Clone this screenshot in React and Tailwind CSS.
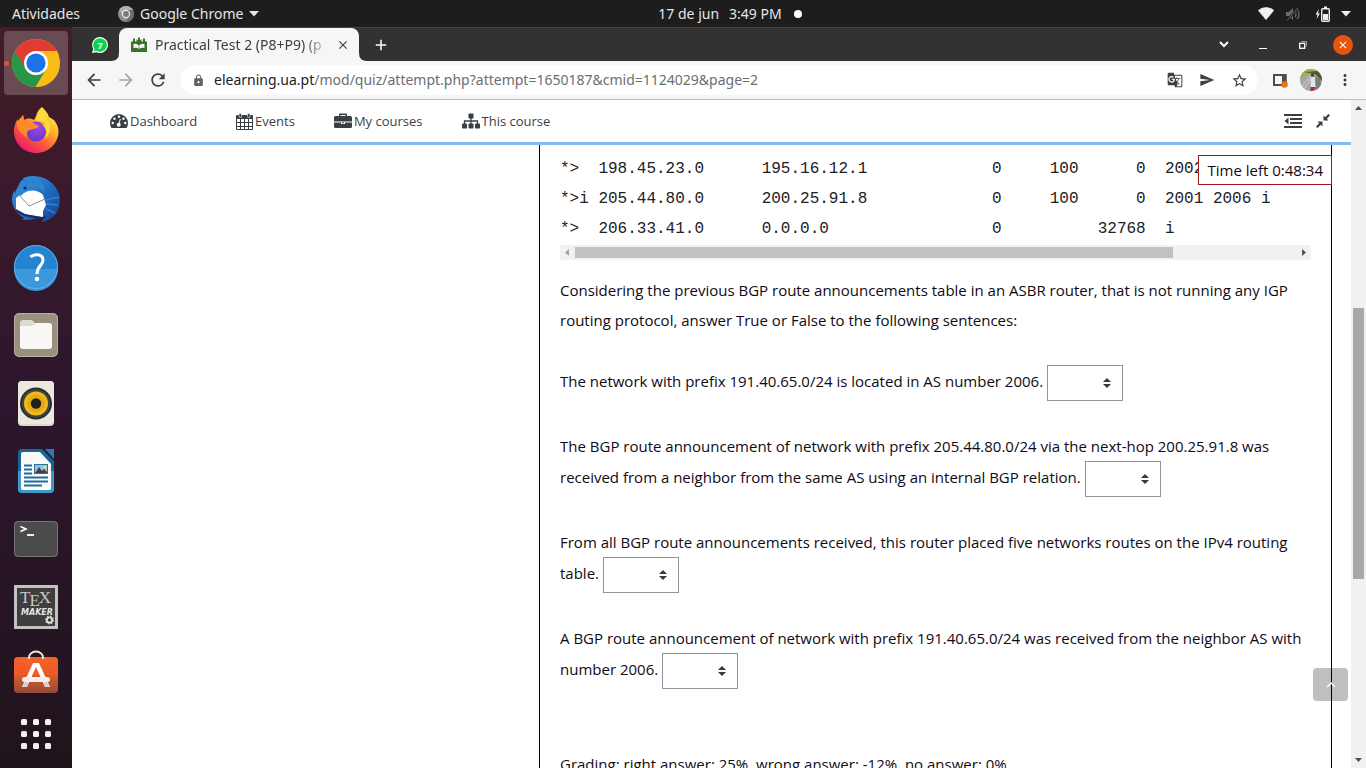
import React from "react";
import {
  MdArrowBack,
  MdArrowForward,
  MdRefresh,
  MdLock,
  MdGTranslate,
  MdSend,
  MdStarBorder,
  MdMoreVert,
  MdClose,
  MdAdd,
} from "react-icons/md";

/* ---------- Dock icons ---------- */

function ChromeLogo() {
  return (
    <svg viewBox="0 0 48 48" className="size-12">
      <defs>
        <clipPath id="chromeDisc">
          <circle cx="24" cy="24" r="24" />
        </clipPath>
      </defs>
      <g clipPath="url(#chromeDisc)">
        <rect width="48" height="48" fill="#fbbc15" />
        <path d="M24 12H48V0H0V8L13.6 30Z" fill="#e03c31" />
        <path d="M3.2 12L13.6 30Q17 36 24 36L34.4 30L23.5 48H0V12Z" fill="#27964a" />
        <path d="M24 12H47L48 48H24L34.4 30Z" fill="#fbbc15" />
      </g>
      <circle cx="24" cy="24" r="12" fill="#fff" />
      <circle cx="24" cy="24" r="9.6" fill="#1a73e8" />
    </svg>
  );
}

function FirefoxLogo() {
  return (
    <svg viewBox="0 0 48 48" className="size-12">
      <defs>
        <linearGradient id="fxBody" x1="0.85" y1="0.05" x2="0.2" y2="0.95">
          <stop offset="0" stopColor="#fff04a" />
          <stop offset="0.35" stopColor="#ffb02e" />
          <stop offset="0.65" stopColor="#ff5a36" />
          <stop offset="1" stopColor="#e8186f" />
        </linearGradient>
        <radialGradient id="fxGlobe" cx="0.6" cy="0.3" r="0.8">
          <stop offset="0" stopColor="#a344e8" />
          <stop offset="1" stopColor="#5a37c8" />
        </radialGradient>
      </defs>
      <path
        d="M30 0C33 3 36 6 37 10L42 13C45 17 47 21 46.500 26C45.500 37 36 46 24.500 46C12 46 2 37 2 24C2 19 4 14 6 12L6 16L11 8L12 13C15 11 19 11 22 13L24 9C25 5 27 2 30 0Z"
        fill="url(#fxBody)"
      />
      <circle cx="24" cy="24.500" r="10" fill="url(#fxGlobe)" />
      <path d="M5 15L11 8L12.500 14C16 12 20 15 23 17L27 19C25 22 20 22 17 23C14 25 15 28 16 31C9 27 4 22 5 15Z" fill="#ff8b28" />
      <path d="M24 14C29 13 33 15 34 18L30 17C34 21 36 26 33 32C37 29 39 23 37 16L34 11L30 1C27 5 24 10 24 14Z" fill="#ffd83a" />
    </svg>
  );
}

function ThunderbirdLogo() {
  return (
    <svg viewBox="0 0 48 48" className="size-12">
      <defs>
        <linearGradient id="tbBody" x1="0" y1="0" x2="1" y2="1">
          <stop offset="0" stopColor="#3d9be6" />
          <stop offset="0.6" stopColor="#1d66b8" />
          <stop offset="1" stopColor="#1c3b8c" />
        </linearGradient>
      </defs>
      <path
        d="M10 4C16 0 26 0 34 4C43 9 48 17 48 26C48 37 40 46 29 47L34 41L18 45L10 45L12 43C5 39 0 32 0 24C0 21 1 18 3 15L3 19C5 12 8 7 14 4Z"
        fill="url(#tbBody)"
      />
      <path d="M4 23L8 20L12 18C18 14 27 15 31 20L34 30L31 36L31 42L10 39L4 34Z" fill="#fff" />
      <path d="M7 20L17 31L33 24" fill="none" stroke="#8d8d8d" strokeWidth="1" />
      <path d="M4 34L13 39L29 42L27 44L12 41L5 37Z" fill="#1a2b68" />
      <path d="M9 6C5 11 5 17 9 21C12 18 13 15 16 13C22 11 27 12 32 16C34 11 29 5 21 4C16 3 12 3 9 6Z" fill="#2e83d3" />
      <path d="M33 25L47 22M34 29L46 30M34 34L43 38" stroke="#2e83d3" strokeWidth="1.500" />
      <circle cx="13" cy="13" r="1.600" fill="#0f2a55" />
    </svg>
  );
}

function HelpLogo() {
  return (
    <svg viewBox="0 0 48 48" className="size-12">
      <circle cx="24" cy="24" r="22" fill="#2484cf" />
      <path d="M2 26H46A22 22 0 0 1 2 26Z" fill="#3c97dc" />
      <circle cx="24" cy="24" r="21.500" fill="none" stroke="#62b0e8" />
      <path d="M18.500 14C22 10.500 31 10.500 31 17C31 23 25 22.500 25 31" fill="none" stroke="#fff" strokeWidth="3" />
      <circle cx="25" cy="36" r="2.300" fill="#fff" />
    </svg>
  );
}

function FilesLogo() {
  return (
    <svg viewBox="0 0 48 48" className="size-12">
      <rect x="2" y="2" width="44" height="44" rx="5" fill="#99907e" />
      <rect x="2.500" y="2.500" width="43" height="43" rx="5" fill="none" stroke="#b8b1a2" />
      <path d="M8 12Q8 9 11 9H20L24 13H36V20H8Z" fill="#e0dbd1" />
      <path d="M8 15H20L24 12H37Q40 12 40 15V35Q40 38 37 38H11Q8 38 8 35Z" fill="#f9f8f6" />
    </svg>
  );
}

function RhythmboxLogo() {
  return (
    <svg viewBox="0 0 48 48" className="size-12">
      <rect x="6" y="2" width="36" height="45" rx="4" fill="#dedacf" />
      <rect x="6" y="2" width="36" height="43" rx="4" fill="#ebe8df" />
      <circle cx="24" cy="24.500" r="16" fill="#2f2f2f" />
      <circle cx="24" cy="24.500" r="14" fill="#444" />
      <circle cx="24" cy="24.500" r="12" fill="#f2b91c" />
      <circle cx="24" cy="24.500" r="9" fill="#e3aa12" />
      <circle cx="24" cy="24.500" r="5.200" fill="#202020" />
    </svg>
  );
}

function WriterLogo() {
  return (
    <svg viewBox="0 0 48 48" className="size-12">
      <path d="M10 2H30L42 14V42Q42 46 38 46H10Q6 46 6 42V6Q6 2 10 2Z" fill="#1b6595" />
      <path d="M6 24H42V42Q42 46 38 46H10Q6 46 6 42Z" fill="#3f9aca" />
      <path d="M33 2H42V12Z" fill="#2b7dac" />
      <path d="M11 5H28L39 17V41Q39 43 37 43H11Q9 43 9 41V7Q9 5 11 5Z" fill="#fafafa" />
      <path d="M12 18.500H20M12 22.500H20M12 26.500H20M12 30.500H36M12 34.500H36M12 38.500H30" stroke="#1f6d9e" strokeWidth="2" />
      <rect x="22" y="17" width="14" height="10" fill="#2a719e" />
      <rect x="23" y="18" width="12" height="8" fill="#8fc5e4" />
      <path d="M23 26L27 20L30 24L32 22L35 25V26Z" fill="#44413c" />
      <circle cx="33" cy="20" r="1.500" fill="#f5df57" />
    </svg>
  );
}

function TerminalLogo() {
  return (
    <svg viewBox="0 0 48 48" className="size-12">
      <rect x="2" y="6" width="44" height="36" rx="4" fill="#4b4b4b" />
      <rect x="2.500" y="6.500" width="43" height="35" rx="4" fill="none" stroke="#757575" />
      <path d="M8.500 11.500L14 14L8.500 16.500" fill="none" stroke="#fff" strokeWidth="1.600" />
      <path d="M15 20H22" stroke="#fff" strokeWidth="1.800" />
    </svg>
  );
}

function TexmakerLogo() {
  return (
    <svg viewBox="0 0 48 48" className="size-12">
      <rect x="2" y="2" width="44" height="44" fill="#c2c2c2" />
      <rect x="5" y="5" width="38" height="38" fill="#3e3e3e" />
      <text x="8" y="20" fill="#c9c9c9" fontFamily="Liberation Serif, serif" fontSize="17">
        T<tspan dx="-1" dy="3">E</tspan><tspan dx="-1" dy="-3">X</tspan>
      </text>
      <text x="9" y="32" fill="#e4e4e4" fontFamily="DejaVu Sans, sans-serif" fontWeight="700" fontStyle="italic" fontSize="8">
        MAKER
      </text>
      <circle cx="37.500" cy="37" r="2.600" fill="none" stroke="#ddd" strokeWidth="1.800" />
      <circle cx="37.500" cy="37" r="3.900" fill="none" stroke="#ddd" strokeWidth="1.200" strokeDasharray="1.600 1.460" />
    </svg>
  );
}

function SoftwareLogo() {
  return (
    <svg viewBox="0 0 48 54" className="h-[54px] w-12">
      <defs>
        <linearGradient id="bag" x1="0" y1="0" x2="0" y2="1">
          <stop offset="0" stopColor="#f5622a" />
          <stop offset="0.5" stopColor="#ee5a26" />
          <stop offset="0.51" stopColor="#dc5a2c" />
          <stop offset="1" stopColor="#934a38" />
        </linearGradient>
      </defs>
      <rect x="2" y="9" width="44" height="36" rx="4" fill="url(#bag)" />
      <path d="M17 11C16 1 32 1 31 11" fill="none" stroke="#f4e3cf" strokeWidth="2" />
      <path d="M21 15H27L38 39H33L24 19L15 39H10Z" fill="#fff" />
      <path d="M10 39L13 33H17L15 39ZM38 39L35 33H31L33 39Z" fill="#d9cfca" />
      <rect x="10" y="29" width="28" height="5" rx="2.500" fill="#f6eeea" />
    </svg>
  );
}

function AppsGrid() {
  const steps = [0, 12, 24];
  return (
    <svg viewBox="0 0 30 30" className="size-[30px]" fill="#f2f0f1">
      {steps.map((y) => steps.map((x) => <rect key={x + "-" + y} x={x} y={y} width="6" height="6" rx="1.500" />))}
    </svg>
  );
}

const dockApps = [
  ["Firefox", FirefoxLogo],
  ["Thunderbird", ThunderbirdLogo],
  ["Ajuda", HelpLogo],
  ["Ficheiros", FilesLogo],
  ["Rhythmbox", RhythmboxLogo],
  ["LibreOffice Writer", WriterLogo],
  ["Terminal", TerminalLogo],
  ["Texmaker", TexmakerLogo],
  ["Ubuntu Software", SoftwareLogo],
];

function Dock() {
  return (
    <aside className="flex w-[72px] shrink-0 flex-col items-center gap-1 bg-linear-to-b from-[#431c28] via-[#2e162e] to-[#20141c] pt-1">
      <button aria-label="Google Chrome" className="relative flex size-16 shrink-0 items-center justify-center rounded-[4px] bg-[#6a4b53]">
        <ChromeLogo />
        <span className="absolute top-[30px] left-0 size-[5px] rounded-full bg-[#e95420]" />
      </button>
      {dockApps.map(([name, Logo]) => (
        <button key={name} aria-label={name} className="flex size-16 shrink-0 items-center justify-center">
          <Logo />
        </button>
      ))}
      <button aria-label="Mostrar aplicações" className="flex h-[46px] w-16 shrink-0 items-center justify-center">
        <AppsGrid />
      </button>
    </aside>
  );
}

/* ---------- Desktop top bar ---------- */

function TopBar() {
  return (
    <header className="grid h-[27px] shrink-0 grid-cols-[1fr_auto_1fr] items-center bg-[#1d1d1d] text-[14px] leading-5 text-[#e6e6e6]">
      <div className="flex items-center pl-3">
        <button>Atividades</button>
        <button className="ml-[38px] flex items-center gap-1.5">
          <svg viewBox="0 0 16 16" className="size-4">
            <circle cx="8" cy="8" r="8" fill="#8e8e8e" />
            <path d="M8 4H15A8 8 0 0 0 1.500 3.500L4.500 10Z" fill="#b0b0b0" />
            <path d="M8 16A8 8 0 0 0 15 4H8L11.500 10Z" fill="#6c6c6c" />
            <circle cx="8" cy="8" r="4.200" fill="#e8e8e8" />
            <circle cx="8" cy="8" r="2.900" fill="#777" />
          </svg>
          <span>Google Chrome</span>
          <svg viewBox="0 0 10 6" className="h-[6px] w-[10px]" fill="#e6e6e6">
            <path d="M0 0H10L5 5.500Z" />
          </svg>
        </button>
      </div>
      <button className="flex items-center">
        <span className="ml-[94px]">17 de jun</span>
        <span className="ml-2.5">3:49 PM</span>
        <span className="ml-3 size-2 rounded-full bg-white" />
      </button>
      <button aria-label="Menu do sistema" className="flex items-center justify-end pr-[15px]">
        <svg viewBox="0 0 16 13" className="h-[13px] w-4" fill="#f0f0f0">
          <path d="M8 13L0 3.500C4 -1 12 -1 16 3.500Z" />
        </svg>
        <svg viewBox="0 0 15 14" className="ml-3 h-[14px] w-[15px]">
          <path d="M0 5H3L7 1V13L3 9H0Z" fill="#6b6b6b" />
          <path d="M9 4Q11 7 9 10M11 2Q15 7 11 12" fill="none" stroke="#6b6b6b" strokeWidth="1.200" />
          <path d="M1.500 13L12 1" stroke="#1d1d1d" strokeWidth="2.500" />
          <path d="M1 13.500L12 1" stroke="#6b6b6b" strokeWidth="1" />
        </svg>
        <svg viewBox="0 0 15 16" className="ml-3.5 h-4 w-[15px]">
          <path d="M4 3L0.500 8.500H2.500L1.500 13L5 7.500H3Z" fill="#f0f0f0" />
          <rect x="6.700" y="2.700" width="7.600" height="12.600" rx="1" fill="none" stroke="#f0f0f0" strokeWidth="1.400" />
          <rect x="9" y="0.500" width="3" height="2" fill="#f0f0f0" />
          <rect x="8" y="8" width="5" height="6" fill="#f0f0f0" />
        </svg>
        <svg viewBox="0 0 10 6" className="ml-[11px] h-[6px] w-[10px]" fill="#f0f0f0">
          <path d="M0 0H10L5 5.500Z" />
        </svg>
      </button>
    </header>
  );
}

/* ---------- Browser chrome ---------- */

function TabStrip() {
  return (
    <div className="flex h-[34px] shrink-0 items-center border-t border-[#454344] bg-[#333132]">
      <button aria-label="WhatsApp" className="ml-5 shrink-0">
        <svg viewBox="0 0 16 16" className="size-4">
          <path d="M8 0A8 8 0 1 1 4.500 15.200L0 16L1.200 12A8 8 0 0 1 8 0Z" fill="#fff" />
          <path d="M8 1.200A6.800 6.800 0 1 1 4.500 13.800L1.800 14.300L2.500 12A6.800 6.800 0 0 1 8 1.200Z" fill="#0bd34f" />
          <text x="5.400" y="11.500" fill="#fff" fontSize="9" fontWeight="700" fontFamily="Open Sans, sans-serif">7</text>
        </svg>
      </button>
      <div className="ml-[3px] flex h-full items-end">
        <svg viewBox="0 0 8 8" className="size-2" fill="#f6f6f7">
          <path d="M8 0V8H0Q8 8 8 0Z" />
        </svg>
        <div className="flex h-full w-60 items-center rounded-t-lg bg-[#f6f6f7] pr-[9px] pl-3">
          <svg viewBox="0 0 16 16" className="size-4 shrink-0" fill="#38702a">
            <path d="M0 4.500H2V1.500H4V4.500H5.500V2L7 3.500V0.500H9V3.500L10.500 2V4.500H12V1.500H14V4.500H16V15H0Z" />
            <path d="M2.500 7Q5.500 6 8 8.500Q10.500 6 13.500 7V11Q10.500 10 8 12Q5.500 10 2.500 11Z" fill="#f6f6f7" />
            <path d="M8 8.500V12" stroke="#38702a" strokeWidth="0.600" />
          </svg>
          <span className="ml-2 flex-1 text-[14px] leading-5 whitespace-nowrap text-[#3c4043] [mask-image:linear-gradient(to_right,black_85%,transparent)]">
            Practical Test 2 (P8+P9) (p
          </span>
          <button aria-label="Fechar separador" className="ml-1.5 shrink-0 text-[#3c4043]">
            <MdClose size={14} />
          </button>
        </div>
        <svg viewBox="0 0 8 8" className="size-2" fill="#f6f6f7">
          <path d="M0 0V8H8Q0 8 0 0Z" />
        </svg>
      </div>
      <button aria-label="Novo separador" className="ml-[5px] text-white">
        <MdAdd size={18} />
      </button>
      <div className="ml-auto flex items-center pr-[13px] text-white">
        <button aria-label="Pesquisar separadores">
          <svg viewBox="0 0 10 7" className="h-[7px] w-[10px]">
            <path d="M1 1L5 5L9 1" fill="none" stroke="currentColor" strokeWidth="2" />
          </svg>
        </button>
        <button aria-label="Minimizar" className="ml-[30px] flex h-2 w-2 items-end">
          <span className="mt-1 block h-px w-2 bg-white" />
        </button>
        <button aria-label="Restaurar" className="ml-8">
          <svg viewBox="0 0 8 8" className="size-2" fill="none" stroke="currentColor">
            <rect x="0.700" y="2.300" width="5" height="5" strokeWidth="1.300" />
            <path d="M2.500 0.500H7.500V5.500" opacity="0.5" />
          </svg>
        </button>
        <button aria-label="Fechar" className="ml-[26px] flex size-5 items-center justify-center rounded-full bg-[#e8540e]">
          <MdClose size={12} />
        </button>
      </div>
    </div>
  );
}

function Avatar() {
  return (
    <svg viewBox="0 0 22 22" className="size-[22px]">
      <defs>
        <clipPath id="avatar">
          <circle cx="11" cy="11" r="11" />
        </clipPath>
      </defs>
      <g clipPath="url(#avatar)">
        <rect width="22" height="22" fill="#a5a7a4" />
        <path d="M0 0H22V5L12 4L0 9Z" fill="#a9ab4e" />
        <path d="M4 3L18 2L22 6V12L15 5Z" fill="#4e5a35" />
        <path d="M0 20L11 6M3 22L12 8" stroke="#d6d6d6" strokeWidth="1" />
        <path d="M14 7L20 10L22 22H15Z" fill="#7b8070" />
        <path d="M11 8H15L15.500 18H10.500Z" fill="#dfe3f2" />
        <path d="M10.500 18H15L14 22H10.500Z" fill="#bb2235" />
        <circle cx="12.500" cy="6" r="1.800" fill="#5b3f34" />
      </g>
    </svg>
  );
}

function Toolbar() {
  return (
    <div className="flex h-[39px] shrink-0 items-center border-b border-[#bfbfbf] bg-[#f6f6f7] pl-3 text-[#3c4043]">
      <button aria-label="Retroceder"><MdArrowBack size={20} /></button>
      <button aria-label="Avançar" className="ml-3 text-[#a3a5a7]"><MdArrowForward size={20} /></button>
      <button aria-label="Recarregar" className="ml-3"><MdRefresh size={20} /></button>
      <div className="ml-3 flex h-[30px] flex-1 items-center rounded-full bg-white pr-2.5 pl-3">
        <MdLock size={13} className="shrink-0 text-[#5f6368]" />
        <a href="#address" className="ml-[9px] flex-1 text-[14px] leading-5 whitespace-nowrap text-[#6b6e72]">
          <span className="text-[#202124]">elearning.ua.pt</span>/mod/quiz/attempt.php?attempt=1650187&amp;cmid=1124029&amp;page=2
        </a>
        <div className="flex items-center gap-4">
          <button aria-label="Traduzir"><MdGTranslate size={16} /></button>
          <button aria-label="Partilhar"><MdSend size={16} /></button>
          <button aria-label="Marcar página"><MdStarBorder size={17} /></button>
        </div>
      </div>
      <button aria-label="Painel lateral" className="ml-[15px]">
        <svg viewBox="0 0 15 15" className="size-[15px]">
          <path d="M1 2H12.500V12H1Z" fill="none" stroke="#4a4c4f" strokeWidth="2" />
          <rect x="9" y="1" width="4.500" height="12" fill="#4a4c4f" />
          <circle cx="11.500" cy="11.500" r="3.300" fill="#e0780b" />
        </svg>
      </button>
      <button aria-label="Perfil" className="ml-3"><Avatar /></button>
      <button aria-label="Menu" className="mr-3 ml-3.5"><MdMoreVert size={18} /></button>
    </div>
  );
}

/* ---------- Page ---------- */

function DashboardIcon() {
  return (
    <svg viewBox="0 0 18 16" className="h-4 w-[18px]">
      <path d="M0 10A9 9 0 0 1 18 10Q18 12.500 16.500 15H1.500Q0 12.500 0 10Z" fill="#3a3f44" />
      <g fill="#fff">
        <circle cx="2.700" cy="10" r="1.200" />
        <circle cx="4.500" cy="5.700" r="1.200" />
        <circle cx="9" cy="3.800" r="1.200" />
        <circle cx="13.500" cy="5.700" r="1.200" />
        <circle cx="15.300" cy="10" r="1.200" />
        <circle cx="8.700" cy="11.700" r="2" />
      </g>
      <path d="M8.700 11.700L10.300 6" stroke="#fff" strokeWidth="1" />
    </svg>
  );
}

function CalendarIcon() {
  return (
    <svg viewBox="0 0 17 17" className="size-[17px]">
      <rect x="0" y="2" width="17" height="15" rx="1" fill="#3a3f44" />
      <path
        d="M1 6H4V9H1ZM5 6H8V9H5ZM9 6H12V9H9ZM13 6H16V9H13ZM1 10H4V13H1ZM5 10H8V13H5ZM9 10H12V13H9ZM13 10H16V13H13ZM1 14H4V16H1ZM5 14H8V16H5ZM9 14H12V16H9ZM13 14H16V16H13Z"
        fill="#fff"
      />
      <rect x="3" y="0.500" width="2.500" height="4" rx="1" fill="#3a3f44" stroke="#fff" strokeWidth="0.600" />
      <rect x="11.500" y="0.500" width="2.500" height="4" rx="1" fill="#3a3f44" stroke="#fff" strokeWidth="0.600" />
    </svg>
  );
}

function BriefcaseIcon() {
  return (
    <svg viewBox="0 0 18 16" className="h-4 w-[18px]" fill="#3a3f44">
      <path d="M5 3V1.500Q5 0.500 6 0.500H12Q13 0.500 13 1.500V3H16.500Q18 3 18 4.500V8.500H0V4.500Q0 3 1.500 3ZM6.500 3H11.500V2H6.500Z" />
      <path d="M0 9.500H7V11H11V9.500H18V13.500Q18 15 16.500 15H1.500Q0 15 0 13.500Z" />
      <rect x="8" y="9.300" width="2" height="1" />
    </svg>
  );
}

function SitemapIcon() {
  return (
    <svg viewBox="0 0 18 16" className="h-4 w-[18px]" fill="#3a3f44">
      <rect x="6.500" y="0.500" width="5" height="5" rx="0.800" />
      <rect x="0" y="10.500" width="5" height="5" rx="0.800" />
      <rect x="6.500" y="10.500" width="5" height="5" rx="0.800" />
      <rect x="13" y="10.500" width="5" height="5" rx="0.800" />
      <path d="M2.500 11V8H15.500V11M9 5V11" fill="none" stroke="#3a3f44" strokeWidth="1.300" />
    </svg>
  );
}

const navItems = [
  ["Dashboard", DashboardIcon],
  ["Events", CalendarIcon],
  ["My courses", BriefcaseIcon],
  ["This course", SitemapIcon],
];

function PageNav() {
  return (
    <nav className="flex h-[45px] shrink-0 items-center border-b-3 border-[#86bbf0] bg-white pr-[21px] pl-[38px] text-[13px] leading-5 text-[#3a3f44]">
      <div className="flex items-center gap-[39px]">
        {navItems.map(([label, Icon]) => (
          <a key={label} href="#page" className="flex items-center gap-0.5">
            <Icon />
            {label}
          </a>
        ))}
      </div>
      <div className="ml-auto flex items-center gap-3.5">
        <button aria-label="Hide blocks">
          <svg viewBox="0 0 18 14" className="h-[14px] w-[18px]" fill="#3a3f44">
            <path d="M0 0H18V2H0ZM6 4H18V6H6ZM6 8H18V10H6ZM0 12H18V14H0ZM4.500 3.500V10.500L0.500 7Z" />
          </svg>
        </button>
        <button aria-label="Standard view">
          <svg viewBox="0 0 14 14" className="size-[14px]" fill="#3a3f44">
            <path d="M7.500 6.500V1.500L9.200 3.200L12.400 0L14 1.600L10.800 4.800L12.500 6.500Z" />
            <path d="M6.500 7.500V12.500L4.800 10.800L1.600 14L0 12.400L3.200 9.200L1.500 7.500Z" />
          </svg>
        </button>
      </div>
    </nav>
  );
}

function AnswerSelect({ label }) {
  return (
    <span className="relative inline-block align-middle">
      <select
        aria-label={label}
        defaultValue=""
        className="block h-9 w-[76px] appearance-none border border-[#8f959e] bg-white px-3 text-[15px] text-[#1d2125]"
      >
        <option value=""></option>
        <option>True</option>
        <option>False</option>
      </select>
      <svg viewBox="0 0 8 10" className="pointer-events-none absolute top-[13px] right-3 h-[10px] w-2" fill="#343a40">
        <path d="M4 0L8 4H0ZM4 10L0 6H8Z" />
      </svg>
    </span>
  );
}

const routes = [
  "*>  198.45.23.0      195.16.12.1             0     100      0  2002",
  "*>i 205.44.80.0      200.25.91.8             0     100      0  2001 2006 i",
  "*>  206.33.41.0      0.0.0.0                 0          32768  i",
].join("\n");

const questions = [
  "The network with prefix 191.40.65.0/24 is located in AS number 2006.",
  "The BGP route announcement of network with prefix 205.44.80.0/24 via the next-hop 200.25.91.8 was received from a neighbor from the same AS using an internal BGP relation.",
  "From all BGP route announcements received, this router placed five networks routes on the IPv4 routing table.",
  "A BGP route announcement of network with prefix 191.40.65.0/24 was received from the neighbor AS with number 2006.",
];

function Question() {
  return (
    <main className="flex min-w-0 flex-1 flex-col border-x border-black px-5 pt-[9px] text-[15px] leading-[30px] text-[#100a14]">
      <pre className="shrink-0 overflow-hidden pb-px font-['Liberation_Mono',monospace] text-[16px] leading-[30px] text-[#1d2125]">
        {routes}
      </pre>
      <div className="flex h-[15px] shrink-0 items-center justify-between bg-[#f1f1f1]">
        <svg viewBox="0 0 15 15" className="size-[15px]" fill="#a3a3a3">
          <path d="M9 4V11L5 7.500Z" />
        </svg>
        <div className="flex h-[11px] flex-1">
          <div className="w-[83%] bg-[#c1c1c1]" />
        </div>
        <svg viewBox="0 0 15 15" className="size-[15px]" fill="#505050">
          <path d="M6 4V11L10 7.500Z" />
        </svg>
      </div>
      <div className="flex flex-col gap-[30px] pt-[15px]">
        <p>
          Considering the previous BGP route announcements table in an ASBR router, that is not running any IGP routing
          protocol, answer True or False to the following sentences:
        </p>
        {questions.map((q) => (
          <p key={q}>
            {q} <AnswerSelect label={q} />
          </p>
        ))}
        <p className="pt-[30px] whitespace-nowrap">Grading: right answer: 25%, wrong answer: -12%, no answer: 0%</p>
      </div>
    </main>
  );
}

function PageScrollbar() {
  return (
    <div className="flex w-[15px] shrink-0 flex-col items-center bg-[#f1f1f1]">
      <svg viewBox="0 0 15 15" className="size-[15px]" fill="#505050">
        <path d="M4 10H11L7.500 6Z" />
      </svg>
      <div className="flex w-[11px] flex-1 flex-col">
        <div className="h-[30.3%]" />
        <div className="h-[42.5%] bg-[#a8a8a8]" />
      </div>
      <svg viewBox="0 0 15 15" className="size-[15px]" fill="#505050">
        <path d="M4 5H11L7.500 9Z" />
      </svg>
    </div>
  );
}

export default function App() {
  return (
    <div className="flex h-screen flex-col overflow-hidden bg-white font-['Open_Sans','Noto_Sans',sans-serif]">
      <div className="flex shrink-0 flex-col font-['Noto_Sans',sans-serif]">
        <TopBar />
      </div>
      <div className="flex min-h-0 flex-1">
        <Dock />
        <div className="flex min-w-0 flex-1 flex-col">
          <div className="flex shrink-0 flex-col font-['Noto_Sans',sans-serif]">
            <TabStrip />
            <Toolbar />
          </div>
          <div className="flex min-h-0 flex-1">
            <div className="flex min-w-0 flex-1 flex-col">
              <PageNav />
              <div className="relative flex min-h-0 flex-1 overflow-hidden pr-[19px]">
                <div className="w-[467px] shrink-0" />
                <Question />
                <div className="absolute top-2.5 right-[19px] border border-[#a01818] bg-white px-2 text-[15px] leading-7 text-[#100a14]">
                  Time left 0:48:34
                </div>
                <button
                  aria-label="Back to top"
                  className="absolute right-[3px] bottom-[67px] flex h-[33px] w-[35px] items-center justify-center rounded-[4px] bg-black/25"
                >
                  <svg viewBox="0 0 10 6" className="h-[6px] w-[10px]">
                    <path d="M1 5L5 1L9 5" fill="none" stroke="#fff" strokeWidth="1.300" />
                  </svg>
                </button>
              </div>
            </div>
            <PageScrollbar />
          </div>
        </div>
      </div>
    </div>
  );
}
